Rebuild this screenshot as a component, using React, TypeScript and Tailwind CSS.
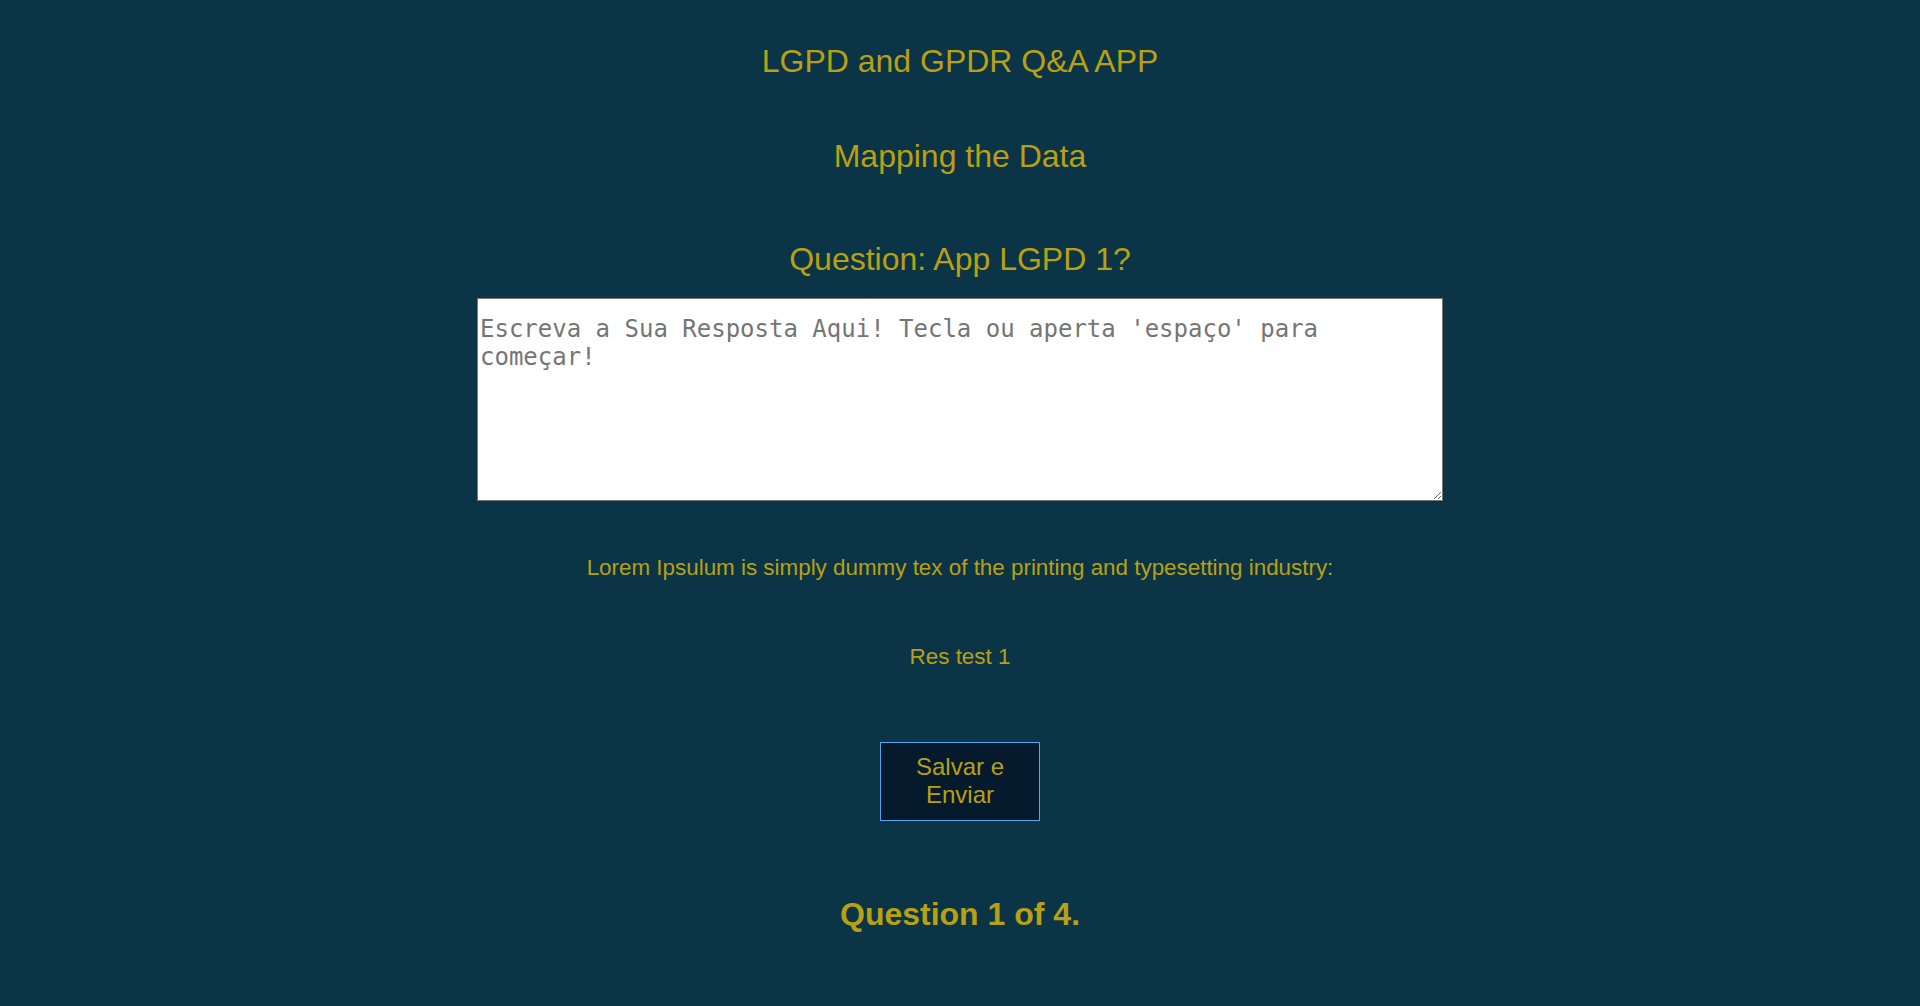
import React from "react";

export default function App() {
  return (
    <div
      className="min-h-screen w-full bg-[#0b3546] text-[#b8a014] text-center flex flex-col items-center pt-[43px]"
      style={{ fontFamily: '"Liberation Sans", Arial, sans-serif' }}
    >
      <h2 className="text-[32px] leading-[37px] font-normal">LGPD and GPDR Q&amp;A APP</h2>
      <h2 className="mt-[58px] text-[32px] leading-[37px] font-normal">Mapping the Data</h2>
      <h2 className="mt-[66px] text-[32px] leading-[37px] font-normal">Question: App LGPD 1?</h2>
      <textarea
        className="mt-[20px] box-border w-[966px] h-[203px] bg-white border border-[#767676] pt-[16px] pb-[2px] px-[2px] text-[24px] leading-[28px] text-black placeholder:text-[#757575] outline-none resize"
        style={{ fontFamily: '"DejaVu Sans Mono", monospace' }}
        placeholder="Escreva a Sua Resposta Aqui! Tecla ou aperta 'espaço' para começar!"
      />
      <p className="mt-[54px] text-[22.4px] leading-[26px]">
        Lorem Ipsulum is simply dummy tex of the printing and typesetting industry:
      </p>
      <p className="mt-[63px] text-[22.4px] leading-[26px]">Res test 1</p>
      <button className="mt-[72px] box-border w-[160px] border border-[#5aa6ec] bg-[#061a2d] pt-[10px] pb-[12px] px-[6px] text-[24px] leading-[27.6px] text-[#b8a014]">
        Salvar e Enviar
      </button>
      <h1 className="mt-[75px] text-[32px] leading-[37px] font-bold">Question 1 of 4.</h1>
    </div>
  );
}
